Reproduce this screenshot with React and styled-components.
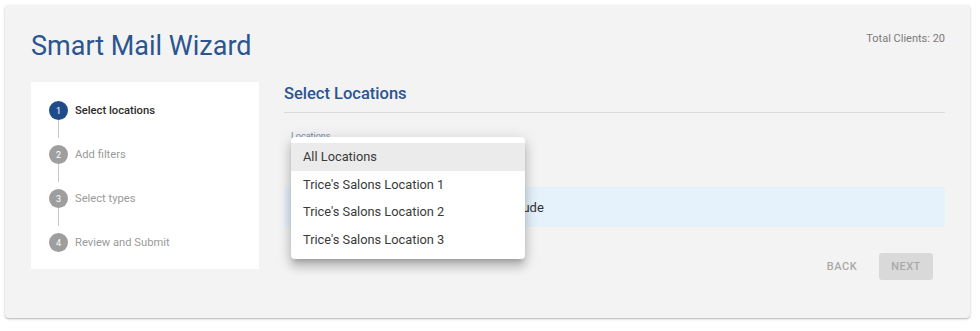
import React from "react";
import styled, { createGlobalStyle } from "styled-components";

const steps = ["Select locations", "Add filters", "Select types", "Review and Submit"];
const locations = [
  "All Locations",
  "Trice's Salons Location 1",
  "Trice's Salons Location 2",
  "Trice's Salons Location 3",
];

export default function App() {
  return (
    <>
      <GlobalStyle />
      <Card>
        <Header>
          <Title>Smart Mail Wizard</Title>
          <Total>Total Clients: 20</Total>
        </Header>
        <Body>
          <Stepper>
            {steps.map((label, i) => (
              <React.Fragment key={label}>
                <Step>
                  <StepIcon active={i === 0}>{i + 1}</StepIcon>
                  <StepLabel active={i === 0}>{label}</StepLabel>
                </Step>
                {i < steps.length - 1 && <Connector />}
              </React.Fragment>
            ))}
          </Stepper>
          <Content>
            <Heading>Select Locations</Heading>
            <Field>
              <FieldLabel>Locations</FieldLabel>
              <Menu>
                {locations.map((loc, i) => (
                  <MenuItem key={loc} selected={i === 0}>
                    {loc}
                  </MenuItem>
                ))}
              </Menu>
            </Field>
            <Info>Please choose all the locations to include</Info>
            <Actions>
              <TextButton>Back</TextButton>
              <FilledButton>Next</FilledButton>
            </Actions>
          </Content>
        </Body>
      </Card>
    </>
  );
}

const GlobalStyle = createGlobalStyle`
  body {
    margin: 0;
    background: #fff;
    font-family: Roboto, "Liberation Sans", sans-serif;
  }
`;

const Card = styled.div`
  margin: 5px 10px 5px 5px;
  height: 313px;
  box-sizing: border-box;
  padding: 26px 25px 0 26px;
  background: #f3f3f3;
  border-radius: 4px;
  box-shadow: 0 1px 3px rgba(0, 0, 0, 0.2), 0 1px 1px rgba(0, 0, 0, 0.12);
`;

const Header = styled.div`
  display: flex;
  justify-content: space-between;
  align-items: flex-start;
`;

const Title = styled.h1`
  margin: 0;
  font-size: 27px;
  line-height: 31px;
  font-weight: 400;
  color: #2b5591;
`;

const Total = styled.div`
  margin-top: 1px;
  font-size: 11px;
  line-height: 13px;
  color: #7a7a7a;
`;

const Body = styled.div`
  display: flex;
  gap: 25px;
  margin-top: 20px;
`;

const Stepper = styled.div`
  width: 228px;
  height: 187px;
  box-sizing: border-box;
  padding: 19px 18px 18px;
  background: #fff;
`;

const Step = styled.div`
  display: flex;
  align-items: center;
  gap: 7px;
  height: 19px;
`;

const StepIcon = styled.div`
  width: 19px;
  height: 19px;
  border-radius: 50%;
  background: ${(p) => (p.active ? "#1e4c8b" : "#9e9e9e")};
  color: #fff;
  font-size: 9px;
  display: flex;
  align-items: center;
  justify-content: center;
  flex-shrink: 0;
`;

const StepLabel = styled.span`
  font-size: 11.2px;
  font-weight: ${(p) => (p.active ? 500 : 400)};
  color: ${(p) => (p.active ? "#2b2b2b" : "#9a9a9a")};
`;

const Connector = styled.div`
  margin-left: 9px;
  width: 1px;
  height: 18px;
  margin-bottom: 7px;
  background: #c9c9c9;
`;

const Content = styled.div`
  flex: 1;
  display: flex;
  flex-direction: column;
`;

const Heading = styled.h2`
  margin: 0;
  font-size: 16.5px;
  line-height: 24px;
  font-weight: 500;
  color: #2b5591;
  padding-bottom: 6px;
  border-bottom: 1px solid #dadada;
`;

const Field = styled.div`
  position: relative;
  height: 56px;
  margin-top: 18px;
  padding-left: 7px;
`;

const FieldLabel = styled.div`
  font-size: 9px;
  line-height: 11px;
  color: #6f86a8;
`;

const Menu = styled.ul`
  position: absolute;
  top: 6px;
  left: 7px;
  z-index: 2;
  width: 234px;
  margin: 0;
  padding: 6px 0 6px;
  list-style: none;
  background: #fff;
  border-radius: 4px;
  box-shadow: 0 5px 5px -3px rgba(0, 0, 0, 0.2), 0 8px 10px 1px rgba(0, 0, 0, 0.14),
    0 3px 14px 2px rgba(0, 0, 0, 0.12);
`;

const MenuItem = styled.li`
  height: 27.5px;
  padding: 0 12px;
  display: flex;
  align-items: center;
  font-size: 12.8px;
  color: #3a3a3a;
  background: ${(p) => (p.selected ? "#ebebeb" : "transparent")};
`;

const Info = styled.div`
  height: 40px;
  padding: 0 16px 0 21px;
  display: flex;
  align-items: center;
  background: #e5f1fb;
  border-radius: 3px;
  font-size: 13px;
  color: #333;
`;

const Actions = styled.div`
  display: flex;
  justify-content: flex-end;
  gap: 10px;
  margin-top: 26px;
  padding-right: 12px;
`;

const ButtonBase = styled.button`
  width: 54px;
  height: 27px;
  border: none;
  border-radius: 3px;
  font-family: inherit;
  font-size: 11px;
  font-weight: 500;
  letter-spacing: 0.5px;
  text-transform: uppercase;
  color: #a9a9a9;
`;

const TextButton = styled(ButtonBase)`
  background: transparent;
`;

const FilledButton = styled(ButtonBase)`
  background: #d9d9d9;
`;
